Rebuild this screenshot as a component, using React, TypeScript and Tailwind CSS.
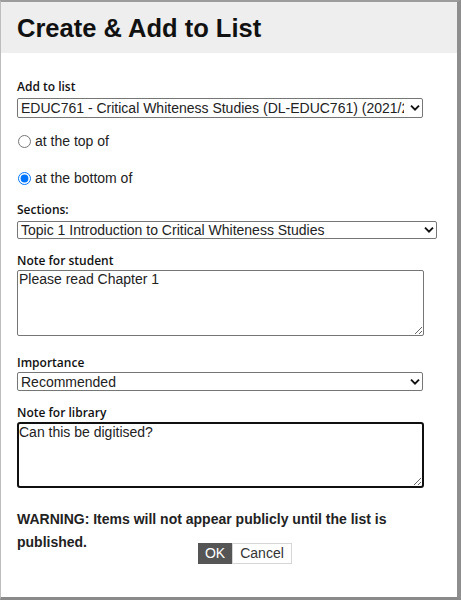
import React from 'react';

const Chevron = () => (
    <svg width="10" height="7" viewBox="0 0 10 7" className="pointer-events-none absolute right-[3px] top-1/2 -translate-y-1/2">
        <path d="M1 1.2 L5 5.2 L9 1.2" fill="none" stroke="#111" strokeWidth="1.9" />
    </svg>
);

const Label = ({ children, className = '' }: { children: React.ReactNode; className?: string }) => (
    <div className={`h-[16px] leading-[16px] text-[12px] font-semibold text-[#111] font-['Open_Sans',sans-serif] ${className}`}>
        {children}
    </div>
);

const Select = ({ value, width, height, className = '' }: { value: string; width: string; height: string; className?: string }) => (
    <div className={`relative ${width} ${height} ${className}`}>
        <select
            defaultValue={value}
            className="block w-full h-full appearance-none bg-white border border-[#767676] rounded-[2px] pl-[3px] pr-[18px] text-[14px] leading-[16px] text-[#222] font-['Liberation_Sans',Arial,sans-serif] outline-none"
        >
            <option>{value}</option>
        </select>
        <Chevron />
    </div>
);

export default function App() {
    return (
        <div className="box-border h-[600px] w-full bg-white border-t-2 border-t-[#9c9c9c] border-l border-l-[#bdbdbd] border-r-4 border-r-[#8e8e8e] border-b-[3px] border-b-[#8a8a8a] overflow-hidden font-['Liberation_Sans',Arial,sans-serif]">
            {/* header */}
            <div className="h-[51px] bg-[#eeeeee] pl-[16px] flex items-center">
                <h1 className="text-[25.5px] font-bold text-[#111] leading-none pt-[2px]">Create &amp; Add to List</h1>
            </div>

            <div className="pl-[16px] pt-[26px]">
                <Label>Add to list</Label>
                <Select
                    value="EDUC761 - Critical Whiteness Studies (DL-EDUC761) (2021/22)"
                    width="w-[406px]"
                    height="h-[20px]"
                    className="mt-[3px]"
                />

                <label className="mt-[13px] h-[20px] flex items-center gap-[4px] text-[14px] text-[#222]">
                    <input type="radio" name="pos" className="m-0 ml-[1px] w-[13px] h-[13px] accent-[#0075ff]" />
                    at the top of
                </label>
                <label className="mt-[17px] h-[20px] flex items-center gap-[4px] text-[14px] text-[#222]">
                    <input type="radio" name="pos" defaultChecked className="m-0 ml-[1px] w-[13px] h-[13px] accent-[#0075ff]" />
                    at the bottom of
                </label>

                <Label className="mt-[14px]">Sections:</Label>
                <Select
                    value="Topic 1 Introduction to Critical Whiteness Studies"
                    width="w-[420px]"
                    height="h-[18px]"
                    className="mt-[3px]"
                />

                <Label className="mt-[14px]">Note for student</Label>
                <textarea
                    defaultValue="Please read Chapter 1"
                    className="block mt-[1px] w-[407px] h-[66px] border border-[#767676] rounded-[2px] px-[1px] text-[14px] leading-[16px] text-[#222] outline-none"
                />

                <Label className="mt-[19px]">Importance</Label>
                <Select value="Recommended" width="w-[406px]" height="h-[19px]" className="mt-[1px]" />

                <Label className="mt-[14px]">Note for library</Label>
                <textarea
                    defaultValue="Can this be digitised?"
                    className="block mt-[1px] w-[407px] h-[66px] border-2 border-[#101010] rounded-[3px] px-0 text-[14px] leading-[16px] text-[#222] outline-none"
                />

                {/* warning + buttons */}
                <p className="mt-[20px] text-[14px] font-bold leading-[23px] text-[#222]">
                    WARNING: Items will not appear publicly until the list is
                </p>
                <div className="flex items-start">
                    <span className="w-[181px] text-[14px] font-bold leading-[23px] text-[#222]">published.</span>
                    <div className="mt-[12px] flex">
                        <button className="h-[21px] w-[34px] bg-[#555555] text-white text-[14px] leading-[21px]">OK</button>
                        <button className="h-[21px] w-[60px] bg-white border border-[#d6d6d6] text-[#333] text-[14px] leading-[19px]">Cancel</button>
                    </div>
                </div>
            </div>
        </div>
    );
}
